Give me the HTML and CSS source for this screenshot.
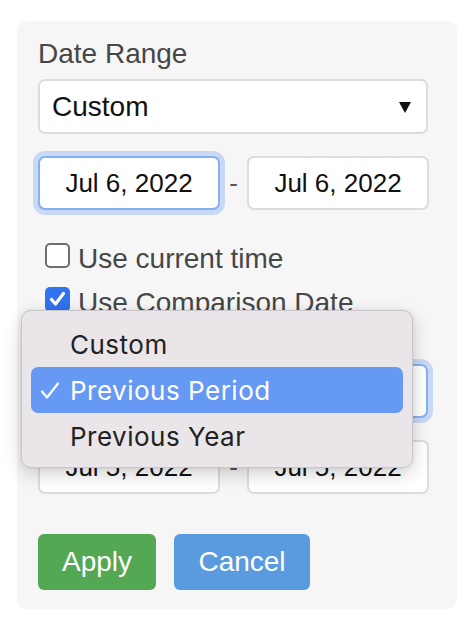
FILE: index.html
```html
<!DOCTYPE html>
<html>
<head>
<meta charset="utf-8">
<link rel="stylesheet" href="styles.css">
</head>
<body>
<div class="panel">
  <div class="label">Date Range</div>
  <div class="select">
    <span>Custom</span>
    <svg class="arrow" width="12" height="11" viewBox="0 0 12 11"><polygon points="0,0 12,0 6,11" fill="#111"/></svg>
  </div>
  <div class="date-row">
    <div class="date-input focused">Jul 6, 2022</div>
    <span class="dash">-</span>
    <div class="date-input">Jul 6, 2022</div>
  </div>
  <div class="checks">
    <div class="check"><span class="box"></span><span class="check-text">Use current time</span></div>
    <div class="check"><span class="box checked"><svg width="25" height="25" viewBox="0 0 25 25"><path d="M6.5 12.5 L10.5 17 L18.5 6.5" fill="none" stroke="#fff" stroke-width="3.2" stroke-linecap="round" stroke-linejoin="round"/></svg></span><span class="check-text">Use Comparison Date</span></div>
  </div>
  <div class="select focused second">
    <span></span>
    <svg class="arrow" width="12" height="11" viewBox="0 0 12 11"><polygon points="0,0 12,0 6,11" fill="#111"/></svg>
  </div>
  <div class="date-row">
    <div class="date-input">Jul 5, 2022</div>
    <span class="dash">-</span>
    <div class="date-input">Jul 5, 2022</div>
  </div>
  <div class="buttons">
    <button class="btn apply">Apply</button>
    <button class="btn cancel">Cancel</button>
  </div>
  <div class="menu">
    <div class="item">Custom</div>
    <div class="item selected"><svg class="tick" width="20" height="18" viewBox="0 0 20 18"><path d="M2 9.5 L7 15.5 L18 1.5" fill="none" stroke="#fff" stroke-width="2.2" stroke-linecap="round" stroke-linejoin="round"/></svg>Previous Period</div>
    <div class="item">Previous Year</div>
  </div>
</div>
</body>
</html>
```

FILE: styles.css
```css
html, body {
  margin: 0;
  padding: 0;
  background: #ffffff;
}

body {
  font-family: "Liberation Sans", Arial, sans-serif;
  width: 472px;
  height: 619px;
  overflow: hidden;
}

.panel {
  position: relative;
  margin: 21px 0 0 17px;
  width: 440px;
  height: 588px;
  box-sizing: border-box;
  padding: 17px 28px 19px 21px;
  background: #f6f6f6;
  border-radius: 9px;
}

.label {
  font-size: 28px;
  line-height: 32px;
  color: #474747;
}

.select {
  margin-top: 9px;
  width: 390px;
  height: 55px;
  box-sizing: border-box;
  border: 2px solid #dcdcdc;
  border-radius: 7px;
  background: #fff;
  display: flex;
  align-items: center;
  justify-content: space-between;
  padding: 0 15px 0 12px;
  font-size: 28px;
  color: #111;
}

.select .arrow {
  margin-top: 2px;
}

.select.second {
  margin-top: 40px;
  height: 54px;
}

.select.focused {
  border-color: #86b0f2;
  box-shadow: 0 0 0 5px #c8d9f6;
}

.date-row {
  margin-top: 22px;
  display: grid;
  grid-template-columns: 182px 1fr 182px;
  align-items: center;
}

.date-input {
  height: 54px;
  box-sizing: border-box;
  border: 2px solid #dcdcdc;
  border-radius: 7px;
  background: #fff;
  display: flex;
  align-items: center;
  justify-content: center;
  font-size: 26px;
  color: #111;
}

.date-input.focused {
  border-color: #86b0f2;
  box-shadow: 0 0 0 5px #c8d9f6;
}

.dash {
  text-align: center;
  font-size: 26px;
  color: #555;
}

.checks {
  margin-top: 26px;
}

.check {
  display: flex;
  align-items: flex-start;
  height: 44px;
  padding-left: 7px;
}

.box {
  margin-top: 7px;
  width: 25px;
  height: 25px;
  box-sizing: border-box;
  border: 2px solid #6e6e6e;
  border-radius: 5px;
  background: #fff;
  flex: none;
  display: flex;
}

.box.checked {
  border: none;
  background: #2f73ee;
}

.check-text {
  margin-top: 7px;
  margin-left: 8px;
  font-size: 28px;
  line-height: 32px;
  color: #474747;
}

.buttons {
  margin-top: 40px;
  display: flex;
  gap: 18px;
}

.btn {
  height: 56px;
  border: none;
  border-radius: 6px;
  font-family: "Liberation Sans", Arial, sans-serif;
  font-size: 28px;
  color: #fff;
  padding: 0;
}

.apply {
  width: 118px;
  background: #54a753;
}

.cancel {
  width: 136px;
  background: #5a9be0;
}

.menu {
  position: absolute;
  left: 4px;
  top: 289px;
  width: 392px;
  height: 158px;
  box-sizing: border-box;
  padding: 10px 9px;
  background: #e9e5e8;
  border: 1px solid #c9c5c8;
  border-radius: 10px;
  box-shadow: 0 6px 18px rgba(0, 0, 0, 0.18), 0 0 4px rgba(0, 0, 0, 0.08);
  font-family: Inter, "Noto Sans", sans-serif;
}

.item {
  position: relative;
  height: 46px;
  display: flex;
  align-items: center;
  padding-left: 39px;
  font-size: 26px;
  letter-spacing: 0.5px;
  color: #222;
  border-radius: 7px;
}

.item.selected {
  background: #6699f4;
  color: #fff;
}

.tick {
  position: absolute;
  left: 9px;
  top: 15px;
}
```
